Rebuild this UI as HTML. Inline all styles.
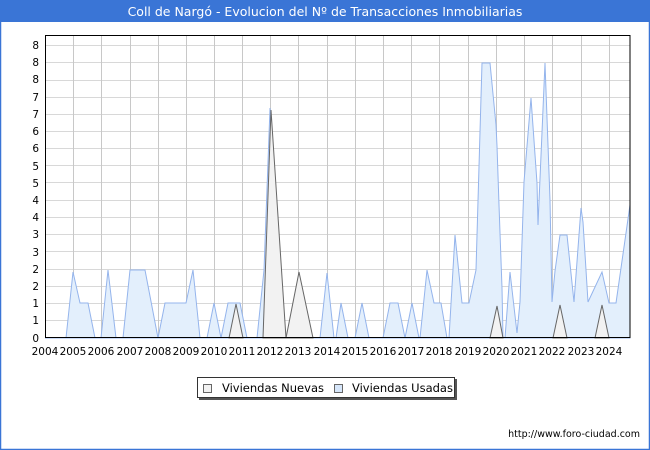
<!DOCTYPE html>
<html><head><meta charset="utf-8"><style>
html,body{margin:0;padding:0;background:#fff}
svg{display:block;font-family:"DejaVu Sans","Liberation Sans",sans-serif}
</style></head><body>
<svg width="650" height="450" viewBox="0 0 650 450" xmlns="http://www.w3.org/2000/svg">
<rect x="0" y="0" width="650" height="450" fill="#fff"/>
<rect x="0.5" y="0.5" width="649" height="449" fill="none" stroke="#3a75d6" stroke-width="1.5"/>
<rect x="0" y="0" width="650" height="22" fill="#3a75d6"/>
<text x="325" y="16" text-anchor="middle" fill="#fff" font-size="12.5">Coll de Nargó - Evolucion del Nº de Transacciones Inmobiliarias</text>
<g stroke="#d8d8d8" stroke-width="1">
<line x1="45" x2="630" y1="320.5" y2="320.5"/><line x1="45" x2="630" y1="303.5" y2="303.5"/>
<line x1="45" x2="630" y1="286.5" y2="286.5"/><line x1="45" x2="630" y1="269.5" y2="269.5"/>
<line x1="45" x2="630" y1="251.5" y2="251.5"/><line x1="45" x2="630" y1="234.5" y2="234.5"/>
<line x1="45" x2="630" y1="217.5" y2="217.5"/><line x1="45" x2="630" y1="200.5" y2="200.5"/>
<line x1="45" x2="630" y1="182.5" y2="182.5"/><line x1="45" x2="630" y1="165.5" y2="165.5"/>
<line x1="45" x2="630" y1="148.5" y2="148.5"/><line x1="45" x2="630" y1="131.5" y2="131.5"/>
<line x1="45" x2="630" y1="114.5" y2="114.5"/><line x1="45" x2="630" y1="97.5" y2="97.5"/>
<line x1="45" x2="630" y1="80.5" y2="80.5"/><line x1="45" x2="630" y1="62.5" y2="62.5"/>
<line x1="45" x2="630" y1="45.5" y2="45.5"/>
</g>
<g stroke="#c8c8c8" stroke-width="1">
<line x1="73.5" x2="73.5" y1="36" y2="338"/><line x1="101.5" x2="101.5" y1="36" y2="338"/>
<line x1="130.5" x2="130.5" y1="36" y2="338"/><line x1="158.5" x2="158.5" y1="36" y2="338"/>
<line x1="186.5" x2="186.5" y1="36" y2="338"/><line x1="214.5" x2="214.5" y1="36" y2="338"/>
<line x1="242.5" x2="242.5" y1="36" y2="338"/><line x1="270.5" x2="270.5" y1="36" y2="338"/>
<line x1="298.5" x2="298.5" y1="36" y2="338"/><line x1="327.5" x2="327.5" y1="36" y2="338"/>
<line x1="355.5" x2="355.5" y1="36" y2="338"/><line x1="383.5" x2="383.5" y1="36" y2="338"/>
<line x1="411.5" x2="411.5" y1="36" y2="338"/><line x1="439.5" x2="439.5" y1="36" y2="338"/>
<line x1="468.5" x2="468.5" y1="36" y2="338"/><line x1="496.5" x2="496.5" y1="36" y2="338"/>
<line x1="524.5" x2="524.5" y1="36" y2="338"/><line x1="552.5" x2="552.5" y1="36" y2="338"/>
<line x1="581.5" x2="581.5" y1="36" y2="338"/><line x1="609.5" x2="609.5" y1="36" y2="338"/>
</g>
<polygon fill="#e3effc" stroke="#94b4ec" stroke-width="1" points="45,338 66,338 73,272 80,303 88,303 95,338 101,338 108,270 116,338 123,338 130,270 145,270 158,338 165,303 186,303 193,270 200,338 207,338 214,303 221,338 228,303 240,303 247,338 257,338 264,270 270,108 276,250 281,338 320,338 327,273 334,338 336,338 341,303 348,338 355,338 362,303 369,338 383,338 390,303 398,303 405,338 412,303 419,338 420,338 427,270 434,303 441,303 447,338 449,338 455,235 462,303 469,303 476,270 482,63 490,63 496,125 497,146 499,205 502,288 503,338 505,338 510,272 517,333 520,302 524,182 531,98 537,183 538,225 545,63 550,200 552,302 555,271 560,235 567,235 574,302 581,208 583,222 588,302 602,272 609,303 616,303 630,205 630,338"/>
<g fill="#f2f2f2" stroke="#666" stroke-width="1">
<polygon points="229,338 236,304 243,338"/>
<polygon points="263,338 271,110 286,338"/>
<polygon points="286,338 299,272 313,338"/>
<polygon points="490,338 497,306 503,338"/>
<polygon points="553,338 560,305 567,338"/>
<polygon points="595,338 602,305 609,338"/>
</g>
<rect x="45.5" y="35.5" width="584.5" height="302" fill="none" stroke="#000" stroke-width="1"/>
<g font-size="10.5" fill="#000" text-anchor="end">
<text x="39" y="342">0</text><text x="39" y="324">1</text><text x="39" y="307">1</text>
<text x="39" y="290">2</text><text x="39" y="273">2</text><text x="39" y="256">3</text>
<text x="39" y="238">3</text><text x="39" y="221">4</text><text x="39" y="204">4</text>
<text x="39" y="187">5</text><text x="39" y="170">5</text><text x="39" y="152">6</text>
<text x="39" y="135">6</text><text x="39" y="118">7</text><text x="39" y="101">7</text>
<text x="39" y="83">8</text><text x="39" y="66">8</text><text x="39" y="49">8</text>
</g>
<g font-size="10.5" fill="#000" text-anchor="middle">
<text x="45" y="355">2004</text><text x="73" y="355">2005</text><text x="101" y="355">2006</text>
<text x="130" y="355">2007</text><text x="158" y="355">2008</text><text x="186" y="355">2009</text>
<text x="214" y="355">2010</text><text x="242" y="355">2011</text><text x="270" y="355">2012</text>
<text x="298" y="355">2013</text><text x="327" y="355">2014</text><text x="355" y="355">2015</text>
<text x="383" y="355">2016</text><text x="411" y="355">2017</text><text x="439" y="355">2018</text>
<text x="468" y="355">2019</text><text x="496" y="355">2020</text><text x="524" y="355">2021</text>
<text x="552" y="355">2022</text><text x="581" y="355">2023</text><text x="609" y="355">2024</text>
</g>
<rect x="199" y="379" width="258" height="21" fill="#555"/>
<rect x="197.5" y="377.5" width="257" height="20" fill="#fff" stroke="#333" stroke-width="1"/>
<rect x="203.5" y="384.5" width="8" height="8" fill="#f2f2f2" stroke="#666"/>
<text x="222" y="392" font-size="11.5">Viviendas Nuevas</text>
<rect x="334.5" y="384.5" width="8" height="8" fill="#d6e6fa" stroke="#666"/>
<text x="352" y="392" font-size="11.5">Viviendas Usadas</text>
<text x="640" y="437" text-anchor="end" font-size="9.5">http://www.foro-ciudad.com</text>
</svg>
</body></html>
